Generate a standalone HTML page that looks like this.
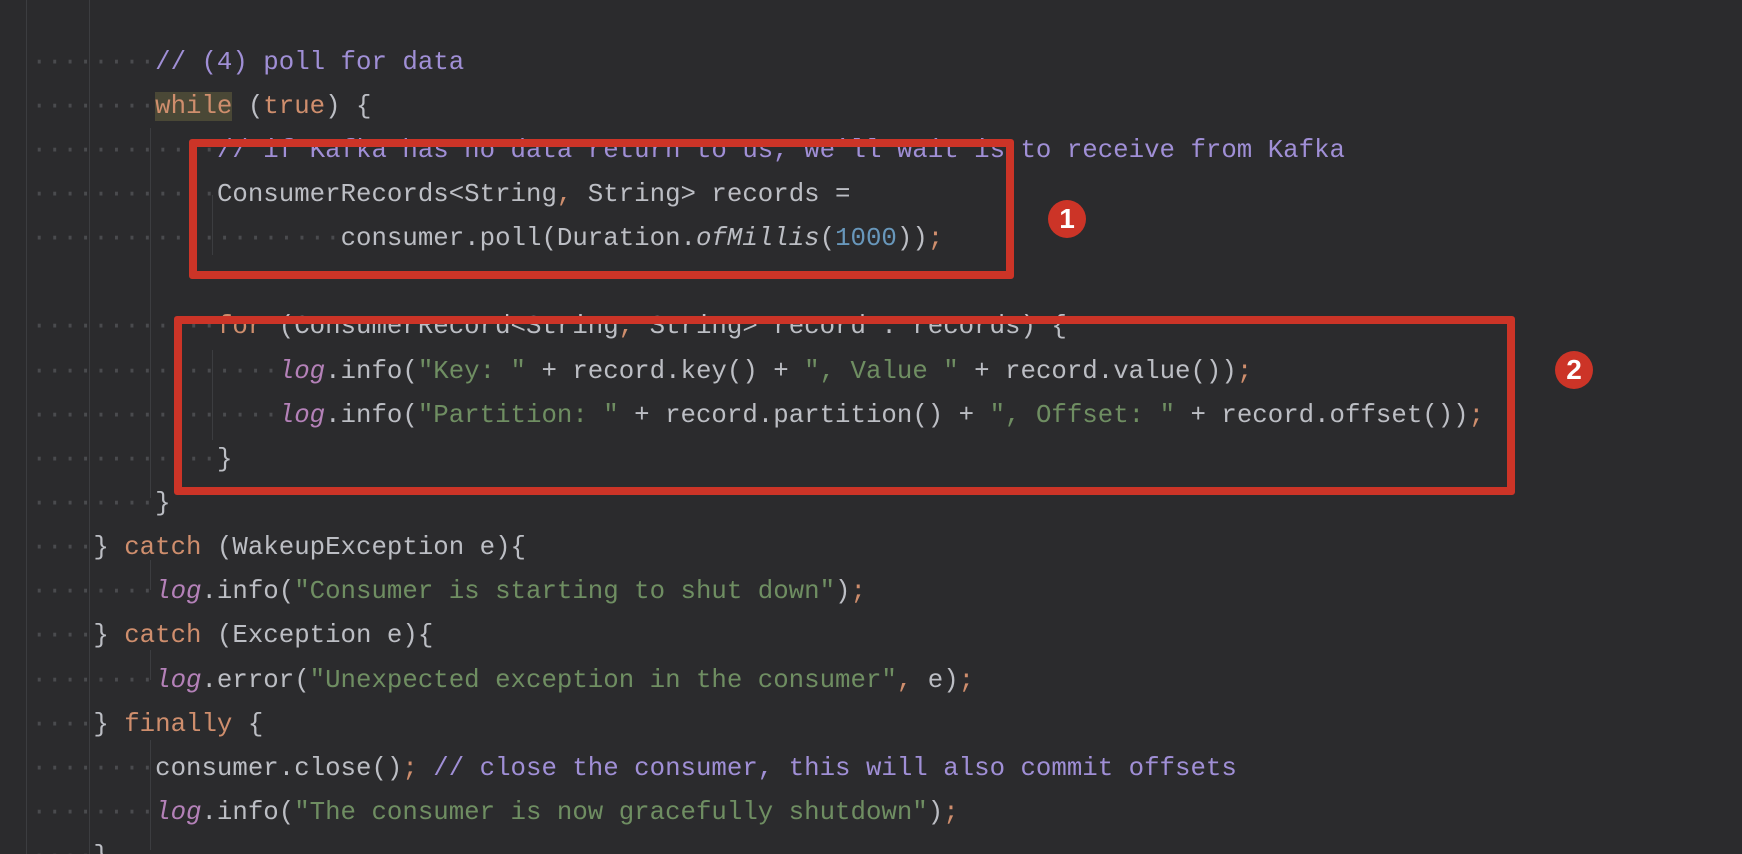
<!DOCTYPE html>
<html><head><meta charset="utf-8"><style>
html,body{margin:0;padding:0;width:1742px;height:854px;overflow:hidden;background:#2b2b2d;}
#wrap{position:relative;width:1742px;height:854px;overflow:hidden;}
#code{position:absolute;left:31.5px;top:-3.5px;font-family:"Liberation Mono",monospace;font-size:25.75px;color:#bcbec4;}
.l{height:44.15px;line-height:44.15px;white-space:pre;}
.d{color:#4a4b4e}
.c{color:#a08fd6}
.k{color:#cf8e6d}
.s{color:#6f8e62}
.n{color:#6897bb}
.g{color:#b481b8;font-style:italic}
.i{font-style:italic}
.wh{background:#4a4836}
.guide{position:absolute;width:1px;background:#3c3d40;}
.box{position:absolute;border:8px solid #cc3427;border-radius:3px;box-sizing:border-box;}
.num{position:absolute;width:38px;height:38px;border-radius:50%;background:#cc3427;color:#fff;font-family:"Liberation Sans",sans-serif;font-size:28px;font-weight:bold;text-align:center;line-height:38px;}
</style></head><body><div id="wrap">
<div class="guide" style="left:26px;top:0;height:854px"></div>
<div class="guide" style="left:89px;top:0;height:854px"></div>
<div class="guide" style="left:150px;top:128px;height:370px"></div>
<div class="guide" style="left:212px;top:195px;height:60px"></div>
<div class="guide" style="left:212px;top:350px;height:90px"></div>
<div class="guide" style="left:150px;top:560px;height:30px"></div>
<div class="guide" style="left:150px;top:650px;height:30px"></div>
<div class="guide" style="left:150px;top:740px;height:110px"></div>
<div id="code"><div class="l"> </div><div class="l"><span class="d">········</span><span class="c">// (4) poll for data</span></div><div class="l"><span class="d">········</span><span class="k wh">while</span> (<span class="k">true</span>) {</div><div class="l"><span class="d">············</span><span class="c">// if Kafka has no data return to us, we'll wait is to receive from Kafka</span></div><div class="l"><span class="d">············</span>ConsumerRecords&lt;String<span class="k">,</span> String&gt; records =</div><div class="l"><span class="d">····················</span>consumer.poll(Duration.<span class="i">ofMillis</span>(<span class="n">1000</span>))<span class="k">;</span></div><div class="l"> </div><div class="l"><span class="d">············</span><span class="k">for</span> (ConsumerRecord&lt;String<span class="k">,</span> String&gt; record : records) {</div><div class="l"><span class="d">················</span><span class="g">log</span>.info(<span class="s">"Key: "</span> + record.key() + <span class="s">", Value "</span> + record.value())<span class="k">;</span></div><div class="l"><span class="d">················</span><span class="g">log</span>.info(<span class="s">"Partition: "</span> + record.partition() + <span class="s">", Offset: "</span> + record.offset())<span class="k">;</span></div><div class="l"><span class="d">············</span>}</div><div class="l"><span class="d">········</span>}</div><div class="l"><span class="d">····</span>} <span class="k">catch</span> (WakeupException e){</div><div class="l"><span class="d">········</span><span class="g">log</span>.info(<span class="s">"Consumer is starting to shut down"</span>)<span class="k">;</span></div><div class="l"><span class="d">····</span>} <span class="k">catch</span> (Exception e){</div><div class="l"><span class="d">········</span><span class="g">log</span>.error(<span class="s">"Unexpected exception in the consumer"</span><span class="k">,</span> e)<span class="k">;</span></div><div class="l"><span class="d">····</span>} <span class="k">finally</span> {</div><div class="l"><span class="d">········</span>consumer.close()<span class="k">;</span> <span class="c">// close the consumer, this will also commit offsets</span></div><div class="l"><span class="d">········</span><span class="g">log</span>.info(<span class="s">"The consumer is now gracefully shutdown"</span>)<span class="k">;</span></div><div class="l"><span class="d">····</span>}</div></div>
<div class="box" style="left:189px;top:139px;width:825px;height:140px"></div>
<div class="box" style="left:174px;top:316px;width:1341px;height:179px"></div>
<div class="num" style="left:1048px;top:200px">1</div>
<div class="num" style="left:1555px;top:351px">2</div>
</div></body></html>
